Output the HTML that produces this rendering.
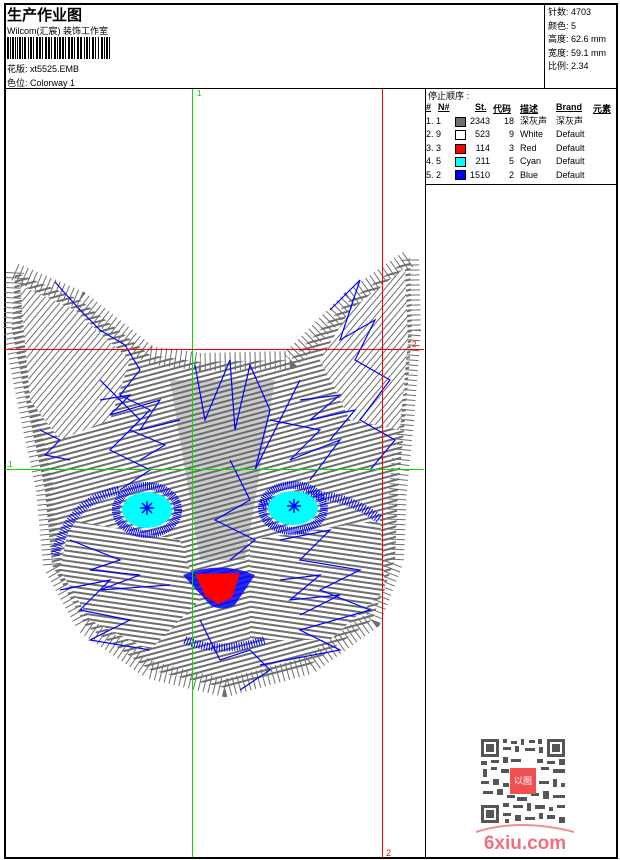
<!DOCTYPE html>
<html><head><meta charset="utf-8"><style>
*{margin:0;padding:0;box-sizing:border-box}
body{width:620px;height:860px;background:#fff;position:relative;overflow:hidden;font-family:"Liberation Sans","WenQuanYi Zen Hei",sans-serif;font-size:9px;color:#000}
.a{position:absolute;white-space:nowrap}
.ln{position:absolute;background:#000}
</style></head><body>
<div class="ln" style="left:4px;top:3px;width:614px;height:2px"></div>
<div class="ln" style="left:4px;top:3px;width:2px;height:856px"></div>
<div class="ln" style="left:616px;top:3px;width:2px;height:856px"></div>
<div class="ln" style="left:4px;top:857px;width:614px;height:2px"></div>
<div class="ln" style="left:4px;top:88px;width:614px;height:1px"></div>
<div class="ln" style="left:544px;top:4px;width:1px;height:84px"></div>
<div class="ln" style="left:425px;top:88px;width:1px;height:770px"></div>
<div class="ln" style="left:425px;top:184px;width:192px;height:1px"></div>

<div class="a" style="left:7px;top:4px;font-size:15px;font-weight:bold">生产作业图</div>
<div class="a" style="left:7px;top:24px">Wilcom(汇宸) 装饰工作室</div>
<svg class="a" style="left:7px;top:37px" width="105" height="22">
<g fill="#000">
<rect x="0" y="0" width="2" height="22"/><rect x="3" y="0" width="1" height="22"/><rect x="5" y="0" width="2" height="22"/><rect x="8" y="0" width="1" height="22"/><rect x="10" y="0" width="1" height="22"/><rect x="12" y="0" width="2" height="22"/><rect x="15" y="0" width="1" height="22"/><rect x="17" y="0" width="2" height="22"/><rect x="21" y="0" width="1" height="22"/><rect x="23" y="0" width="2" height="22"/><rect x="26" y="0" width="1" height="22"/><rect x="29" y="0" width="2" height="22"/><rect x="32" y="0" width="2" height="22"/><rect x="35" y="0" width="1" height="22"/><rect x="38" y="0" width="2" height="22"/><rect x="41" y="0" width="2" height="22"/><rect x="44" y="0" width="1" height="22"/><rect x="47" y="0" width="2" height="22"/><rect x="50" y="0" width="1" height="22"/><rect x="52" y="0" width="2" height="22"/><rect x="55" y="0" width="2" height="22"/><rect x="58" y="0" width="1" height="22"/><rect x="61" y="0" width="2" height="22"/><rect x="64" y="0" width="2" height="22"/><rect x="67" y="0" width="1" height="22"/><rect x="70" y="0" width="2" height="22"/><rect x="73" y="0" width="2" height="22"/><rect x="77" y="0" width="1" height="22"/><rect x="79" y="0" width="2" height="22"/><rect x="82" y="0" width="1" height="22"/><rect x="85" y="0" width="2" height="22"/><rect x="88" y="0" width="1" height="22"/><rect x="91" y="0" width="1" height="22"/><rect x="94" y="0" width="2" height="22"/><rect x="97" y="0" width="1" height="22"/><rect x="99" y="0" width="2" height="22"/><rect x="102" y="0" width="1" height="22"/>
</g></svg>
<div class="a" style="left:7px;top:62px">花版: xt5525.EMB</div>
<div class="a" style="left:7px;top:76px">色位: Colorway 1</div>

<div class="a" style="left:548px;top:6px;line-height:13.5px">针数: 4703<br>颜色: 5<br>高度: 62.6 mm<br>宽度: 59.1 mm<br>比例: 2.34</div>

<div class="a" style="left:428px;top:89px">停止顺序 :</div>
<div class="a" style="left:426px;top:102px;font-weight:bold;text-decoration:underline">#</div>
<div class="a" style="left:438px;top:102px;font-weight:bold;text-decoration:underline">N#</div>
<div class="a" style="left:475px;top:102px;font-weight:bold;text-decoration:underline">St.</div>
<div class="a" style="left:493px;top:102px;font-weight:bold;text-decoration:underline">代码</div>
<div class="a" style="left:520px;top:102px;font-weight:bold;text-decoration:underline">描述</div>
<div class="a" style="left:556px;top:102px;font-weight:bold;text-decoration:underline">Brand</div>
<div class="a" style="left:593px;top:102px;font-weight:bold;text-decoration:underline">元素</div>
<div class="a" style="left:426px;top:115px;line-height:13.4px">1. 1<br>2. 9<br>3. 3<br>4. 5<br>5. 2</div>
<div class="a" style="left:455px;top:117px;width:11px;height:10px;border:1px solid #000;background:#6e6e6e"></div>
<div class="a" style="left:455px;top:130px;width:11px;height:10px;border:1px solid #000;background:#fff"></div>
<div class="a" style="left:455px;top:144px;width:11px;height:10px;border:1px solid #000;background:#f00"></div>
<div class="a" style="left:455px;top:157px;width:11px;height:10px;border:1px solid #000;background:#0ff"></div>
<div class="a" style="left:455px;top:170px;width:11px;height:10px;border:1px solid #000;background:#00f"></div>
<div class="a" style="left:466px;top:115px;width:24px;text-align:right;line-height:13.4px">2343<br>523<br>114<br>211<br>1510</div>
<div class="a" style="left:500px;top:115px;width:14px;text-align:right;line-height:13.4px">18<br>9<br>3<br>5<br>2</div>
<div class="a" style="left:520px;top:115px;line-height:13.4px">深灰声<br>White<br>Red<br>Cyan<br>Blue</div>
<div class="a" style="left:556px;top:115px;line-height:13.4px">深灰声<br>Default<br>Default<br>Default<br>Default</div>

<svg class="a" style="left:0;top:0" width="620" height="860">
<defs>
<pattern id="hatch" width="5" height="5" patternUnits="userSpaceOnUse" patternTransform="rotate(75)">
<rect width="5" height="5" fill="#fff"/><rect width="2" height="5" fill="#6e6e6e"/></pattern>
<pattern id="hatch2" width="5" height="5" patternUnits="userSpaceOnUse" patternTransform="rotate(8)">
<rect width="5" height="5" fill="#fff"/><rect width="5" height="2" fill="#6e6e6e"/></pattern>
<pattern id="hatch3" width="5" height="5" patternUnits="userSpaceOnUse" patternTransform="rotate(40)">
<rect width="5" height="5" fill="#fff"/><rect width="1" height="5" fill="#6e6e6e"/></pattern>
</defs>
<path d="M15,272 L80,300 L150,355 L200,362 L290,360 L350,300 L410,258 L412,330 L405,420 L398,490 L395,560 L372,620 L310,665 L225,688 L150,670 L85,625 L52,565 L45,490 L28,410 L12,330 Z" fill="url(#hatch)" stroke="#6e6e6e" stroke-width="18" stroke-dasharray="1 4"/>
<path d="M20,285 L75,310 L130,360 L110,420 L60,440 L30,400 Z" fill="url(#hatch3)"/>
<path d="M405,268 L350,310 L320,360 L350,420 L400,430 L408,340 Z" fill="url(#hatch3)"/>
<path d="M70,520 L180,540 L200,600 L150,650 L90,620 L60,570 Z" fill="url(#hatch2)"/>
<path d="M250,540 L380,520 L385,590 L330,640 L250,640 Z" fill="url(#hatch2)"/>
<path d="M170,380 L200,560 L245,560 L275,380 Z" fill="#6e6e6e" opacity="0.35"/>
<g fill="none" stroke="#0000ff" stroke-width="1.2">
<polyline points="55,282 80,310 100,330 125,345 140,370 120,395 150,410 130,430 165,445 140,460"/>
<polyline points="195,365 205,420 230,360 235,430 250,365 270,410 255,470 280,420 300,380"/>
<polyline points="330,310 360,280 340,340 375,320 355,360 390,380 360,420 395,440 370,470"/>
<polyline points="100,380 140,420 110,450 150,470 120,490"/>
<polyline points="230,460 250,500 215,520 255,540 230,560"/>
<polyline points="60,590 110,580 80,610 130,620 90,640 150,650"/>
<polyline points="280,540 330,530 300,560 360,570 320,590 370,610 300,630 340,650 260,665"/>
<polyline points="270,420 320,430 290,460 340,440 310,480"/>
<polyline points="40,430 60,440 45,455 70,460"/>
<polyline points="100,400 130,395 110,415 160,400 140,430 180,420"/>
<polyline points="300,400 340,395 310,420 355,410 330,440"/>
<polyline points="70,540 120,560 90,570 140,575 100,590 170,585"/>
<polyline points="280,580 320,575 290,600 340,595 300,615"/>
<polyline points="200,620 220,660 250,650 270,670 240,690"/>
</g>
<path d="M55,555 Q70,500 120,490 M262,505 Q330,480 380,520" fill="none" stroke="#0000ff" stroke-width="9" stroke-dasharray="1 1.5"/>
<path d="M185,640 Q220,655 265,640" fill="none" stroke="#0000ff" stroke-width="8" stroke-dasharray="1 1.5"/>
<ellipse cx="147" cy="510" rx="31" ry="24" fill="none" stroke="#0000ff" stroke-width="8" stroke-dasharray="1 1"/>
<ellipse cx="147" cy="510" rx="25" ry="18" fill="#00ffff"/>
<ellipse cx="293" cy="508" rx="31" ry="23" fill="none" stroke="#0000ff" stroke-width="8" stroke-dasharray="1 1"/>
<ellipse cx="293" cy="508" rx="25" ry="17" fill="#00ffff"/>
<g stroke="#0000ff" stroke-width="1.5"><path d="M140,508h14M147,501v14M142,503l10,10M152,503l-10,10"/><path d="M287,506h14M294,499v14M289,501l10,10M299,501l-10,10"/></g>
<path d="M183,575 Q220,560 255,575 L235,605 Q222,612 210,605 Z" fill="#0000ff" opacity="0.85"/>
<path d="M195,574 L240,573 L232,598 L218,604 L205,596 Z" fill="#ff0000"/>
<line x1="192.5" y1="89" x2="192.5" y2="857" stroke="#00e000" stroke-width="1"/>
<line x1="382.5" y1="89" x2="382.5" y2="857" stroke="#ff0000" stroke-width="1"/>
<line x1="5" y1="349.5" x2="424" y2="349.5" stroke="#ff0000" stroke-width="1"/>
<line x1="5" y1="469.5" x2="424" y2="469.5" stroke="#00e000" stroke-width="1"/>
<text x="197" y="96" font-size="8" fill="#00c000" font-family="Liberation Sans">1</text>
<text x="8" y="467" font-size="8" fill="#00c000" font-family="Liberation Sans">1</text>
<text x="412" y="347" font-size="8" fill="#ff0000" font-family="Liberation Sans">2</text>
<text x="386" y="856" font-size="9" fill="#ff0000" font-family="Liberation Sans">2</text>
<g transform="translate(481,739)" fill="#555">
<rect x="0" y="0" width="18" height="18"/><rect x="3" y="3" width="12" height="12" fill="#fff"/><rect x="5" y="5" width="8" height="8"/>
<rect x="66" y="0" width="18" height="18"/><rect x="69" y="3" width="12" height="12" fill="#fff"/><rect x="71" y="5" width="8" height="8"/>
<rect x="0" y="66" width="18" height="18"/><rect x="3" y="69" width="12" height="12" fill="#fff"/><rect x="5" y="71" width="8" height="8"/>
<path d="M22,0h4v4h-4zM30,2h6v3h-6zM40,0h3v6h-3zM48,1h6v3h-6zM57,0h4v5h-4zM22,8h8v3h-8zM34,7h4v6h-4zM44,9h10v3h-10zM58,8h4v6h-4zM0,22h6v4h-6zM10,21h8v3h-8zM22,18h5v6h-5zM30,20h10v3h-10zM56,20h6v4h-6zM66,22h8v3h-8zM78,20h6v6h-6zM2,30h4v8h-4zM10,28h6v3h-6zM20,30h8v4h-8zM60,28h8v3h-8zM72,30h12v4h-12zM0,42h8v3h-8zM12,40h6v6h-6zM22,44h6v4h-6zM58,42h10v3h-10zM72,40h4v8h-4zM80,44h4v4h-4zM2,52h10v3h-10zM16,50h6v6h-6zM26,56h8v3h-8zM36,58h10v4h-10zM50,54h8v3h-8zM62,52h6v8h-6zM72,56h12v3h-12zM22,64h6v4h-6zM32,66h10v3h-10zM46,64h4v8h-4zM54,66h10v4h-10zM68,68h4v4h-4zM76,66h8v3h-8zM22,74h8v3h-8zM34,76h6v6h-6zM44,78h10v3h-10zM58,74h4v6h-4zM66,76h8v4h-8zM78,78h6v6h-6zM24,80h4v4h-4z"/>
<rect x="29" y="29" width="26" height="26" fill="#f05050"/>
<text x="42" y="45" font-size="9" fill="#fff" text-anchor="middle" font-family="WenQuanYi Zen Hei">以图</text>
</g>
<path d="M476,832 Q520,818 574,832" fill="none" stroke="#f09090" stroke-width="2"/>
<text x="525" y="849" font-size="19" font-weight="bold" fill="#f07080" text-anchor="middle" font-family="Liberation Sans">6xiu.com</text>
</svg>
</body></html>
